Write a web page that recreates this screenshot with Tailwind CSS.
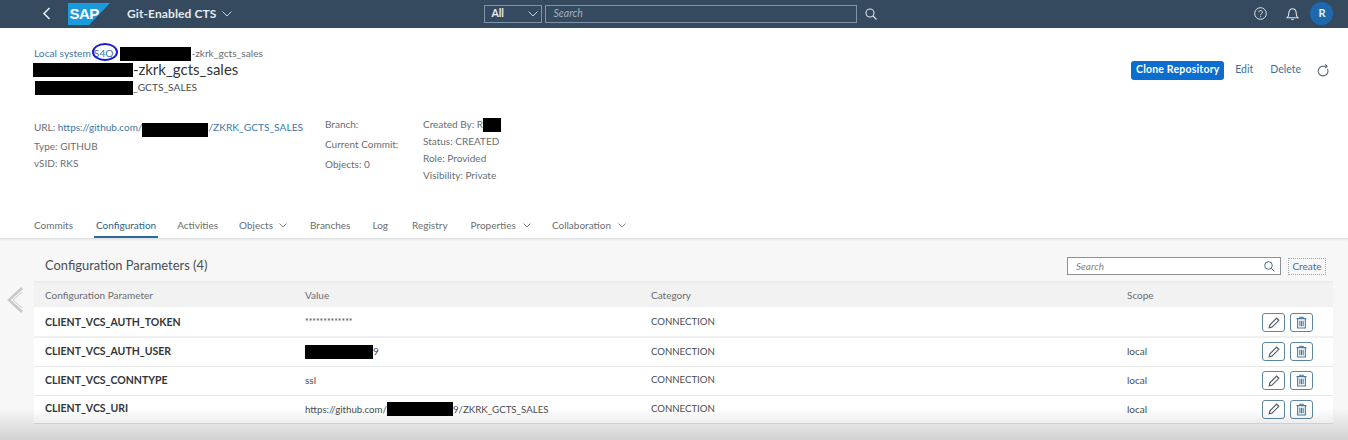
<!DOCTYPE html>
<html lang="en">
  <head>
    <meta charset="UTF-8" />
    <title>Git-Enabled CTS</title>
    <script src="https://cdn.jsdelivr.net/npm/@tailwindcss/browser@4"></script>
  </head>
  <body class="bg-white font-['Lato','Noto_Sans',sans-serif] text-[#6a6d70]">
    <div class="relative h-[440px] w-[1348px] overflow-hidden">
      <!-- Shell bar -->
      <header class="flex h-[28px] items-center bg-[#354a5f] pb-px text-white">
        <svg class="ml-[42px] h-[13px] w-[9px]" viewBox="0 0 9 13" fill="none" stroke="#e8edf2" stroke-width="1.6"><path d="M7.5 1 2 6.5 7.5 12" /></svg>
        <svg class="ml-[17px] h-[22px] w-[42px]" viewBox="0 0 42 22">
          <polygon points="0,0 42,0 21,22 0,22" fill="#1a9bdc" />
          <text x="1.500" y="16" fill="#fff" font-family="Liberation Sans" font-size="15" font-weight="700" letter-spacing="-0.6">SAP</text>
        </svg>
        <span class="ml-[17px] text-[12px] font-bold tracking-[0.1px] text-[#e6ebf0]">Git-Enabled CTS</span>
        <svg class="ml-[6px] h-[6px] w-[10px]" viewBox="0 0 10 6" fill="none" stroke="#c9d3dc"><path d="M.5.5 5 5 9.5.5" /></svg>
        <div class="ml-[252px] flex h-[18px] w-[58px] items-center justify-between border border-[#7f93a8] pl-[6px] pr-[3px] text-[10.5px] font-bold text-[#e6ebf0]">
          All
          <svg class="h-[6px] w-[10px]" viewBox="0 0 10 6" fill="none" stroke="#c9d3dc"><path d="M.5.5 5 5 9.5.5" /></svg>
        </div>
        <div class="ml-[3px] flex h-[18px] w-[312px] items-center border border-[#7f93a8] pl-[7px] text-[10.5px] italic text-[#9fb0c0]">Search</div>
        <svg class="ml-[8px] h-[12px] w-[12px]" viewBox="0 0 12 12" fill="none" stroke="#dbe3ea" stroke-width="1.1"><circle cx="5" cy="5" r="4" /><path d="m8 8 3.5 3.5" /></svg>
        <svg class="ml-[377px] h-[13px] w-[13px]" viewBox="0 0 13 13" fill="none" stroke="#dbe3ea"><circle cx="6.5" cy="6.5" r="5.8" /><path d="M4.8 5.2c0-2.2 3.6-2.2 3.6 0 0 1.4-1.8 1.4-1.8 3" /><path d="M6.6 9.2v1" /></svg>
        <svg class="ml-[19px] h-[14px] w-[13px]" viewBox="0 0 12 13" fill="none" stroke="#dbe3ea"><path d="M1 10c1.3-1 1.6-2 1.6-4.4C2.600 3.300 4 1.700 6 1.700s3.400 1.600 3.400 3.900C9.400 8 9.700 9 11 10z" /><path d="M4.800 11.500h2.400" /></svg>
        <div class="ml-[11px] flex h-[23px] w-[23px] items-center justify-center rounded-full bg-[#1e69ae] text-[11px] font-bold text-[#e6f0f8]">R</div>
      </header>

      <!-- Object header -->
      <section class="relative h-[211px] border-b border-[#e2e3e4] shadow-[0_1px_2px_rgba(0,0,0,0.08)]">
        <div class="flex justify-between">
          <div class="pl-[33px] pt-[19px]">
            <div class="flex h-[14px] items-center pl-[1px] text-[10.2px]">
              <span class="text-[#3f78a6]">Local system</span>
              <span class="ml-[3px] text-[#3f78a6]">S4Q</span>
              <span class="ml-[7px] h-[14px] w-[71px] bg-black"></span>
              <span class="text-[#6a6d70]">-zkrk_gcts_sales</span>
            </div>
            <div class="-mt-[1px] flex h-[19px] items-center text-[15px] text-[#32363a]">
              <span class="h-[14px] w-[100px] bg-black"></span>
              <span>-zkrk_gcts_sales</span>
            </div>
            <div class="mt-[2px] flex h-[14px] items-center pl-[2px] text-[10.2px] text-[#4a4d50]">
              <span class="h-[14px] w-[98px] bg-black"></span>
              <span>_GCTS_SALES</span>
            </div>
          </div>
          <div class="flex items-center pr-[19px] pt-[17px] text-[10.5px] text-[#3f6f99]">
            <button class="h-[19px] w-[93px] rounded-[3px] bg-[#0a6ed1] text-[10.5px] font-bold tracking-[0.2px] text-white">Clone Repository</button>
            <span class="ml-[11px]">Edit</span>
            <span class="ml-[17px]">Delete</span>
            <svg class="ml-[16px] h-[13px] w-[12px]" viewBox="0 0 11 12" fill="none" stroke="#4e6a82"><path d="M9.600 4.500A4.500 4.500 0 1 1 6 2H9" /><path d="M7.500.3 9.300 2 7.500 3.700" /></svg>
          </div>
        </div>

        <div class="mt-[22px] flex text-[10px] text-[#6a6d70]">
          <div class="w-[325px] shrink-0 pl-[34px] pt-[1px]">
            <div class="flex h-[19px] items-center">URL:&nbsp;<span class="text-[#3f78a6]">https://github.com/</span><span class="mt-[5px] h-[14px] w-[66px] bg-black"></span><span class="text-[10.2px] text-[#3f78a6]">/ZKRK_GCTS_SALES</span></div>
            <div class="mt-px flex h-[17px] items-center">Type: GITHUB</div>
            <div class="flex h-[17px] items-center">vSID: RKS</div>
          </div>
          <div class="-mt-[3px] w-[98px] shrink-0">
            <div class="flex h-[20px] items-center">Branch:</div>
            <div class="flex h-[20px] items-center">Current Commit:</div>
            <div class="flex h-[20px] items-center">Objects: 0</div>
          </div>
          <div class="-mt-[1px]">
            <div class="flex h-[17px] items-center">Created By: R<span class="h-[14px] w-[18px] bg-black"></span></div>
            <div class="flex h-[17px] items-center">Status: CREATED</div>
            <div class="flex h-[17px] items-center">Role: Provided</div>
            <div class="flex h-[17px] items-center">Visibility: Private</div>
          </div>
        </div>

        <!-- Tabs -->
        <nav class="absolute bottom-0 left-[34px] flex h-[29px] items-center pt-[3px] text-[10px] text-[#6a6d70]">
          <span>Commits</span>
          <span class="relative ml-[23px] flex h-full items-center text-[#2d5f88]">Configuration<span class="absolute -left-[2px] -right-[2px] bottom-0 h-[2px] bg-[#2d6a9a]"></span></span>
          <span class="ml-[21px]">Activities</span>
          <span class="ml-[21px]">Objects</span>
          <svg class="ml-[6px] h-[5px] w-[8px]" viewBox="0 0 8 5" fill="none" stroke="#85888b"><path d="M.5.500 4 4 7.500.500" /></svg>
          <span class="ml-[23px]">Branches</span>
          <span class="ml-[22px]">Log</span>
          <span class="ml-[24px]">Registry</span>
          <span class="ml-[23px]">Properties</span>
          <svg class="ml-[7px] h-[5px] w-[8px]" viewBox="0 0 8 5" fill="none" stroke="#85888b"><path d="M.5.500 4 4 7.500.500" /></svg>
          <span class="ml-[21px]">Collaboration</span>
          <svg class="ml-[7px] h-[5px] w-[8px]" viewBox="0 0 8 5" fill="none" stroke="#85888b"><path d="M.5.500 4 4 7.500.500" /></svg>
        </nav>
      </section>

      <!-- Configuration table -->
      <main class="h-[201px] bg-[#f7f7f7] pl-[34px] pr-[15px] pt-[16px]">
        <div class="flex h-[22px] items-center justify-between pl-[11px] pr-[7px]">
          <h2 class="text-[12.9px] text-[#4a4d50]">Configuration Parameters (4)</h2>
          <div class="flex items-center">
            <div class="flex h-[18px] w-[214px] items-center justify-between border border-[#8d9195] bg-white pl-[8px] pr-[5px] text-[10px] italic text-[#808488]">
              Search
              <svg class="h-[11px] w-[11px]" viewBox="0 0 11 11" fill="none" stroke="#4e6a82"><circle cx="4.500" cy="4.500" r="3.800" /><path d="m7.300 7.300 3.200 3.200" /></svg>
            </div>
            <div class="ml-[7px] flex h-[17px] w-[38px] items-center justify-center border border-dotted border-[#9aa4ac] text-[10px] text-[#3f6f99]">Create</div>
          </div>
        </div>
        <table class="mt-[4px] w-full table-fixed border-t-2 border-[#ececec] text-[10px]">
          <thead>
            <tr class="h-[25px] bg-[#f2f2f2] text-left text-[#6a6d70]">
              <th class="w-[271px] pl-[11px] font-normal">Configuration Parameter</th>
              <th class="w-[346px] font-normal">Value</th>
              <th class="w-[476px] font-normal">Category</th>
              <th class="font-normal">Scope</th>
            </tr>
          </thead>
          <tbody class="bg-white text-[#4a4d50]">
            <tr class="h-[30px] border-b-2 border-[#f0f0f0] [&>td]:pt-[2px]">
              <td class="pl-[11px] text-[10.5px] font-bold text-[#32363a]">CLIENT_VCS_AUTH_TOKEN</td>
              <td class="text-[8.6px]">*************</td>
              <td class="text-[9.6px]">CONNECTION</td>
              <td>
                <div class="flex items-center justify-between">
                  <span>&nbsp;</span>
                  <div class="mr-[20px] flex gap-[5px]">
                    <button class="flex h-[19px] w-[23px] items-center justify-center rounded-[3px] border border-[#5d86a3]"><svg class="h-[12px] w-[12px]" viewBox="0 0 10 10" fill="none" stroke="#4e5a64"><path d="M1 9l.6-2.400L7.200 1 9 2.800 3.400 8.400z" /></svg></button>
                    <button class="flex h-[19px] w-[23px] items-center justify-center rounded-[3px] border border-[#5d86a3]"><svg class="h-[13px] w-[11px]" viewBox="0 0 10 11" fill="none" stroke="#4a7aa0"><path d="M.5 2h9M3.500 2V.7h3V2M1.500 2v8.500h7V2M3.500 4v5M5 4v5M6.500 4v5" /></svg></button>
                  </div>
                </div>
              </td>
            </tr>
            <tr class="h-[29px] border-b border-[#e6e6e6]">
              <td class="pl-[11px] text-[10.5px] font-bold text-[#32363a]">CLIENT_VCS_AUTH_USER</td>
              <td><div class="flex items-center"><span class="h-[14px] w-[68px] bg-black"></span><span>9</span></div></td>
              <td class="text-[9.6px]">CONNECTION</td>
              <td>
                <div class="flex items-center justify-between">
                  <span>local</span>
                  <div class="mr-[20px] flex gap-[5px]">
                    <button class="flex h-[19px] w-[23px] items-center justify-center rounded-[3px] border border-[#5d86a3]"><svg class="h-[12px] w-[12px]" viewBox="0 0 10 10" fill="none" stroke="#4e5a64"><path d="M1 9l.6-2.400L7.200 1 9 2.800 3.400 8.400z" /></svg></button>
                    <button class="flex h-[19px] w-[23px] items-center justify-center rounded-[3px] border border-[#5d86a3]"><svg class="h-[13px] w-[11px]" viewBox="0 0 10 11" fill="none" stroke="#4a7aa0"><path d="M.5 2h9M3.500 2V.7h3V2M1.500 2v8.500h7V2M3.500 4v5M5 4v5M6.500 4v5" /></svg></button>
                  </div>
                </div>
              </td>
            </tr>
            <tr class="h-[29px] border-b border-[#e6e6e6]">
              <td class="pl-[11px] text-[10.5px] font-bold text-[#32363a]">CLIENT_VCS_CONNTYPE</td>
              <td>ssl</td>
              <td class="text-[9.6px]">CONNECTION</td>
              <td>
                <div class="flex items-center justify-between">
                  <span>local</span>
                  <div class="mr-[20px] flex gap-[5px]">
                    <button class="flex h-[19px] w-[23px] items-center justify-center rounded-[3px] border border-[#5d86a3]"><svg class="h-[12px] w-[12px]" viewBox="0 0 10 10" fill="none" stroke="#4e5a64"><path d="M1 9l.6-2.400L7.200 1 9 2.800 3.400 8.400z" /></svg></button>
                    <button class="flex h-[19px] w-[23px] items-center justify-center rounded-[3px] border border-[#5d86a3]"><svg class="h-[13px] w-[11px]" viewBox="0 0 10 11" fill="none" stroke="#4a7aa0"><path d="M.5 2h9M3.500 2V.7h3V2M1.500 2v8.500h7V2M3.500 4v5M5 4v5M6.500 4v5" /></svg></button>
                  </div>
                </div>
              </td>
            </tr>
            <tr class="h-[28px] border-b border-[#e0e0e0]">
              <td class="pl-[11px] text-[10.5px] font-bold text-[#32363a]">CLIENT_VCS_URI</td>
              <td><div class="flex items-center text-[9.7px]">https://github.com/<span class="h-[14px] w-[66px] bg-black"></span>9/ZKRK_GCTS_SALES</div></td>
              <td class="text-[9.6px]">CONNECTION</td>
              <td>
                <div class="flex items-center justify-between">
                  <span>local</span>
                  <div class="mr-[20px] flex gap-[5px]">
                    <button class="flex h-[19px] w-[23px] items-center justify-center rounded-[3px] border border-[#5d86a3]"><svg class="h-[12px] w-[12px]" viewBox="0 0 10 10" fill="none" stroke="#4e5a64"><path d="M1 9l.6-2.400L7.200 1 9 2.800 3.400 8.400z" /></svg></button>
                    <button class="flex h-[19px] w-[23px] items-center justify-center rounded-[3px] border border-[#5d86a3]"><svg class="h-[13px] w-[11px]" viewBox="0 0 10 11" fill="none" stroke="#4a7aa0"><path d="M.5 2h9M3.500 2V.7h3V2M1.500 2v8.500h7V2M3.500 4v5M5 4v5M6.500 4v5" /></svg></button>
                  </div>
                </div>
              </td>
            </tr>
          </tbody>
        </table>
      </main>

      <!-- Overlays: annotation ring, video back arrow, bottom fade -->
      <div class="absolute left-[92px] top-[43px] h-[18px] w-[26px] rounded-[50%] border-2 border-[#1a1ad0]"></div>
      <svg class="absolute left-[6px] top-[286px] h-[28px] w-[18px]" viewBox="0 0 18 28" fill="none" stroke="#c9c9c9" stroke-width="2.500"><path d="M16 2 3 14l13 12" /><path d="M16 6 7 14l9 8" stroke-width="1" /></svg>
      <div class="absolute inset-x-0 bottom-0 h-[32px] bg-gradient-to-b from-black/0 to-black/15"></div>
    </div>
  </body>
</html>
